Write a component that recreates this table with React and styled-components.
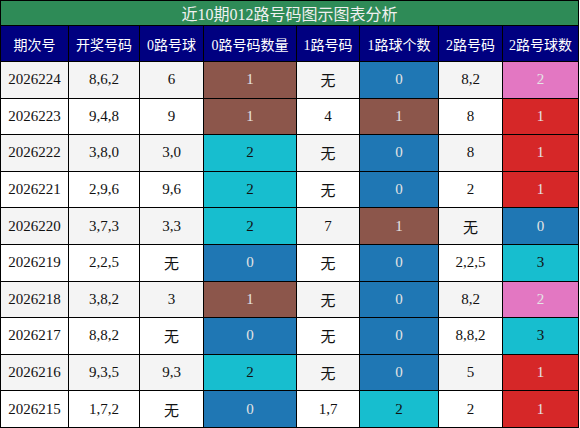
import { createGlobalStyle } from "styled-components";
import styled from "styled-components";

const GlobalStyle = createGlobalStyle`
  body {
    margin: 0;
    background: #fff;
  }
`;

const COLORS = {
  blue: "#1f77b4",
  brown: "#8c564b",
  cyan: "#17becf",
  pink: "#e377c2",
  red: "#d62728",
};

const HEADERS = [
  "期次号",
  "开奖号码",
  "0路号球",
  "0路号码数量",
  "1路号码",
  "1路球个数",
  "2路号码",
  "2路号球数",
];

// period, draw, 0路, count, 1路, count, 2路, count
const ROWS = [
  ["2026224", "8,6,2", "6", ["1", "brown"], "无", ["0", "blue"], "8,2", ["2", "pink"]],
  ["2026223", "9,4,8", "9", ["1", "brown"], "4", ["1", "brown"], "8", ["1", "red"]],
  ["2026222", "3,8,0", "3,0", ["2", "cyan"], "无", ["0", "blue"], "8", ["1", "red"]],
  ["2026221", "2,9,6", "9,6", ["2", "cyan"], "无", ["0", "blue"], "2", ["1", "red"]],
  ["2026220", "3,7,3", "3,3", ["2", "cyan"], "7", ["1", "brown"], "无", ["0", "blue"]],
  ["2026219", "2,2,5", "无", ["0", "blue"], "无", ["0", "blue"], "2,2,5", ["3", "cyan"]],
  ["2026218", "3,8,2", "3", ["1", "brown"], "无", ["0", "blue"], "8,2", ["2", "pink"]],
  ["2026217", "8,8,2", "无", ["0", "blue"], "无", ["0", "blue"], "8,8,2", ["3", "cyan"]],
  ["2026216", "9,3,5", "9,3", ["2", "cyan"], "无", ["0", "blue"], "5", ["1", "red"]],
  ["2026215", "1,7,2", "无", ["0", "blue"], "1,7", ["2", "cyan"], "2", ["1", "red"]],
];

const Table = styled.div`
  display: grid;
  grid-template-columns: 67px 70px 63px 92px 62px 78px 63px 75px;
  grid-template-rows: 24px 35px repeat(10, 1fr);
  gap: 1px;
  padding: 1px;
  width: 579px;
  height: 428px;
  box-sizing: border-box;
  background: #000;
  font-family: "Liberation Serif", "Noto Sans CJK SC", serif;
`;

const Title = styled.div`
  grid-column: 1 / -1;
  background: #2e8b57;
  color: #f0f0f0;
  font-size: 16px;
  display: flex;
  align-items: center;
  justify-content: center;
`;

const Head = styled.div`
  background: #000080;
  color: #fff;
  font-size: 14px;
  display: flex;
  align-items: center;
  justify-content: center;
  white-space: nowrap;
`;

const Cell = styled.div`
  background: ${(p) => (p.$stripe ? "#f4f4f4" : "#fff")};
  color: #111;
  font-size: 15px;
  display: flex;
  align-items: center;
  justify-content: center;
`;

const CountCell = styled.div`
  background: ${(p) => COLORS[p.$tone]};
  color: ${(p) => (p.$tone === "cyan" ? "#111" : "#e4e4e4")};
  font-size: 15px;
  display: flex;
  align-items: center;
  justify-content: center;
`;

export default function App() {
  return (
    <>
      <GlobalStyle />
      <Table>
        <Title>近10期012路号码图示图表分析</Title>
        {HEADERS.map((h) => (
          <Head key={h}>{h}</Head>
        ))}
        {ROWS.map((row, i) =>
          row.map((v, j) =>
            Array.isArray(v) ? (
              <CountCell key={`${i}-${j}`} $tone={v[1]}>
                {v[0]}
              </CountCell>
            ) : (
              <Cell key={`${i}-${j}`} $stripe={i % 2 === 0}>
                {v}
              </Cell>
            )
          )
        )}
      </Table>
    </>
  );
}
